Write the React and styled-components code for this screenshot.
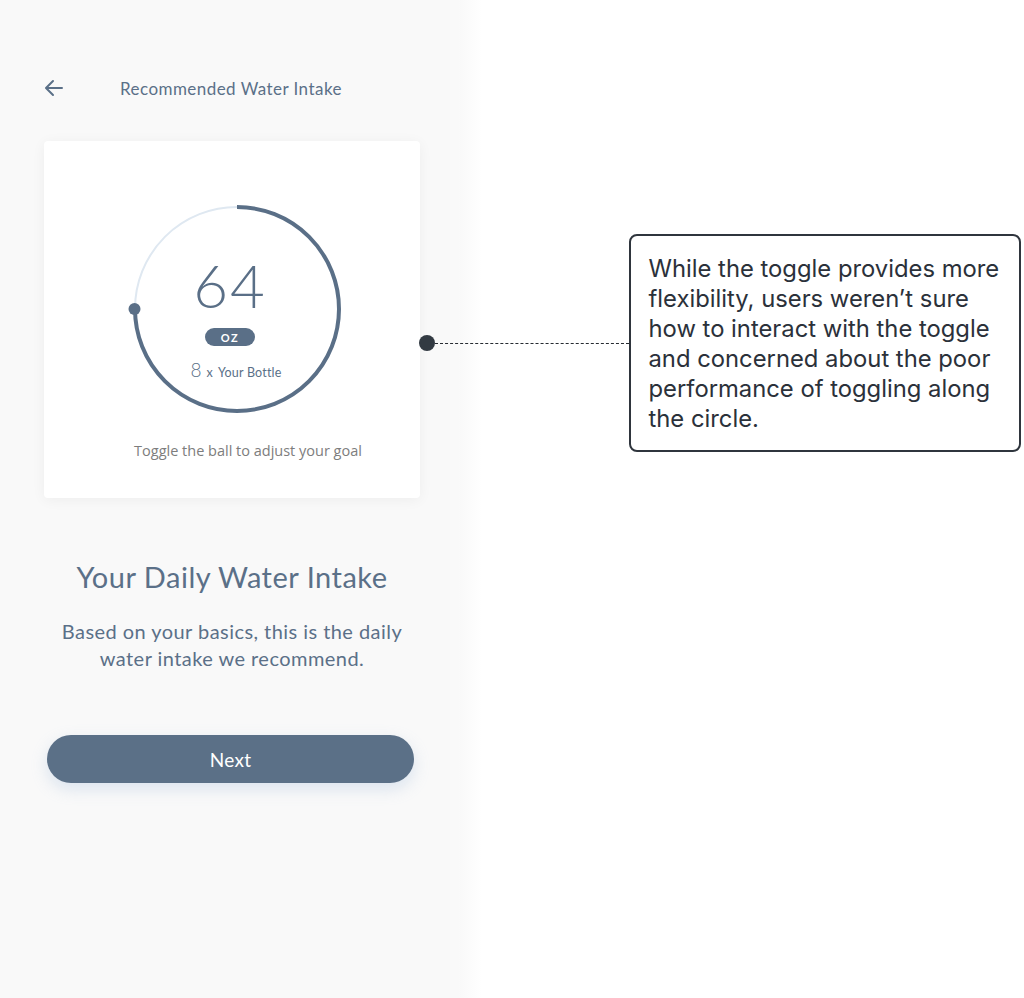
import React from 'react'
import styled, { createGlobalStyle } from 'styled-components'

const GlobalStyle = createGlobalStyle`
  html, body {
    margin: 0;
    padding: 0;
    background: #fff;
  }
  * {
    box-sizing: border-box;
  }
`

function BackArrow() {
  return (
    <svg width="20" height="18" viewBox="0 0 20 18" fill="none">
      <path
        d="M18 9H3M9 2L2 9l7 7"
        stroke="#5b7088"
        strokeWidth="2"
        strokeLinecap="round"
        strokeLinejoin="round"
      />
    </svg>
  )
}

function Ring() {
  const r = 102
  const c = 2 * Math.PI * r
  return (
    <svg width="220" height="220" viewBox="0 0 220 220">
      <circle cx="110" cy="110" r={r} fill="none" stroke="#dfe8f1" strokeWidth="2" />
      <circle
        cx="110"
        cy="110"
        r={r}
        fill="none"
        stroke="#5a6f87"
        strokeWidth="4"
        strokeDasharray={`${c * 0.75} ${c}`}
        transform="rotate(-90 110 110)"
      />
      <circle cx="7.5" cy="110" r="6" fill="#5a6f87" />
    </svg>
  )
}

function App() {
  return (
    <Page>
      <GlobalStyle />
      <Panel>
        <Header>
          <BackButton>
            <BackArrow />
          </BackButton>
          <HeaderTitle>Recommended Water Intake</HeaderTitle>
        </Header>
        <Card>
          <RingWrap>
            <Ring />
            <RingContent>
              <Amount>64</Amount>
              <Unit>OZ</Unit>
              <Bottles>
                <BigNum>8</BigNum>
                <Small>x</Small>
                <Small>Your Bottle</Small>
              </Bottles>
            </RingContent>
          </RingWrap>
          <Hint>Toggle the ball to adjust your goal</Hint>
        </Card>
        <Heading>Your Daily Water Intake</Heading>
        <Body>
          Based on your basics, this is the daily
          <br />
          water intake we recommend.
        </Body>
        <NextButton>Next</NextButton>
      </Panel>

      <Callout>
        <Dot />
        <Dash />
        <Note>
          While the toggle provides more flexibility, users weren’t sure how to interact
          with the toggle and concerned about the poor performance of toggling along the
          circle.
        </Note>
      </Callout>
    </Page>
  )
}

export default App

const Page = styled.div`
  position: relative;
  width: 1024px;
  height: 998px;
  overflow: hidden;
  background: linear-gradient(to right, #f9f9f9 458px, #ffffff 482px);
  font-family: 'Lato', 'Noto Sans', sans-serif;
`
const Panel = styled.div`
  width: 464px;
  padding: 0 44px;
  display: flex;
  flex-direction: column;
`
const Header = styled.div`
  display: flex;
  align-items: center;
  height: 44px;
  margin-top: 66px;
  margin-bottom: 31px;
`
const BackButton = styled.div`
  display: flex;
  align-items: center;
  width: 76px;
  margin-top: -1px;
`
const HeaderTitle = styled.div`
  font-size: 17px;
  color: #5b7088;
  letter-spacing: 0.45px;
`
const Card = styled.div`
  width: 376px;
  height: 357px;
  background: #fff;
  border-radius: 4px;
  box-shadow: 0 2px 14px rgba(0, 0, 0, 0.05);
  display: flex;
  flex-direction: column;
  align-items: center;
  padding-top: 58px;
`
const RingWrap = styled.div`
  display: grid;
  margin-left: 10px;
  & > * {
    grid-area: 1 / 1;
  }
`
const RingContent = styled.div`
  display: flex;
  flex-direction: column;
  align-items: center;
  padding-top: 56px;
  margin-left: -14px;
`
const Amount = styled.div`
  font-size: 60px;
  font-weight: 300;
  line-height: 60px;
  color: #5a6f87;
  letter-spacing: 2px;
`
const Unit = styled.div`
  margin-top: 13px;
  width: 50px;
  height: 18px;
  border-radius: 9px;
  background: #5a6f87;
  color: #fff;
  font-size: 11px;
  font-weight: 700;
  letter-spacing: 1.5px;
  display: flex;
  align-items: center;
  justify-content: center;
`
const Bottles = styled.div`
  margin-top: 12px;
  margin-left: 12px;
  display: flex;
  align-items: baseline;
  gap: 5px;
  color: #5a6f87;
`
const BigNum = styled.span`
  font-size: 19px;
  font-weight: 300;
`
const Small = styled.span`
  font-size: 12.5px;
  letter-spacing: 0.2px;
`
const Hint = styled.div`
  margin-top: 22px;
  margin-left: 32px;
  font-family: 'Open Sans', sans-serif;
  font-size: 14.5px;
  color: #7d7d7d;
`
const Heading = styled.h1`
  margin: 62px 0 0;
  text-align: center;
  font-size: 29px;
  font-weight: 400;
  color: #5b7088;
  line-height: 34px;
  letter-spacing: 0.5px;
`
const Body = styled.p`
  margin: 24px 0 0;
  text-align: center;
  font-size: 20px;
  line-height: 27px;
  color: #5b7088;
  letter-spacing: 0.45px;
`
const NextButton = styled.button`
  margin: 63px 0 0 3px;
  width: 367px;
  height: 48px;
  border: none;
  border-radius: 24px;
  background: #5b7087;
  color: #fff;
  font-family: 'Lato', sans-serif;
  font-size: 19px;
  letter-spacing: 0.3px;
  box-shadow: 0 6px 16px rgba(150, 180, 215, 0.3);
`
const Callout = styled.div`
  position: absolute;
  left: 419px;
  top: 234px;
  display: flex;
  align-items: flex-start;
`
const Dot = styled.div`
  width: 16px;
  height: 16px;
  border-radius: 50%;
  background: #323a42;
  margin-top: 101px;
`
const Dash = styled.div`
  width: 194px;
  margin-top: 108.5px;
  border-top: 1.5px dashed #262b31;
`
const Note = styled.div`
  width: 392px;
  height: 218px;
  border: 2px solid #2f353d;
  border-radius: 8px;
  background: #fff;
  padding: 17.5px 8px 0 17.5px;
  font-family: 'Inter', sans-serif;
  font-size: 23.8px;
  line-height: 30px;
  color: #2b313a;
`
